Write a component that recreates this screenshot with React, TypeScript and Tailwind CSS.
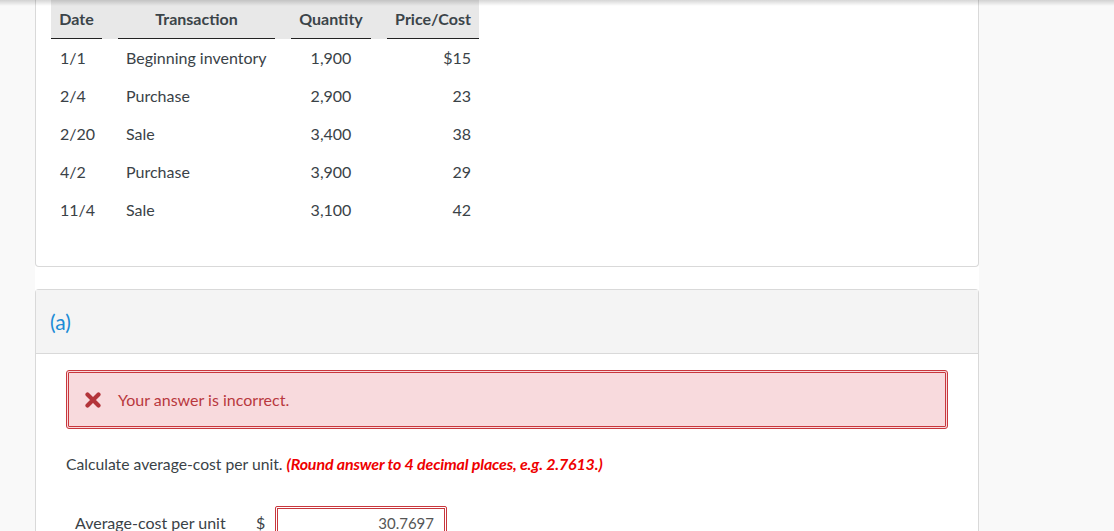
import React from "react";

const rows = [
  ["1/1", "Beginning inventory", "1,900", "$15"],
  ["2/4", "Purchase", "2,900", "23"],
  ["2/20", "Sale", "3,400", "38"],
  ["4/2", "Purchase", "3,900", "29"],
  ["11/4", "Sale", "3,100", "42"],
];

export default function App() {
  return (
    <div
      className="relative h-[531px] w-[1114px] overflow-hidden bg-[#f9f9f9] text-[#3a4247]"
      style={{ fontFamily: "Lato, 'Open Sans', sans-serif" }}
    >
      <div className="pointer-events-none absolute left-0 right-0 top-0 z-10 h-[6px] bg-gradient-to-b from-[rgba(0,0,0,0.16)] to-transparent" />
      <div className="ml-[35px] w-[944px] bg-white">
        {/* Card 1 */}
        <div className="rounded-b-[4px] border-x border-b border-[#d9d9d9] pl-[15px] pb-[37px]">
          <div className="w-[428px] text-[16px]">
            <div className="grid h-[39px] grid-cols-[51px_157px_80px_92px] gap-x-4 bg-[#e8e8e8] font-bold text-[#3b4449]">
              <div className="flex items-center justify-center border-b border-[#222]">Date</div>
              <div className="flex items-center justify-center border-b border-[#222]">Transaction</div>
              <div className="flex items-center justify-center border-b border-[#222]">Quantity</div>
              <div className="flex items-center justify-center border-b border-[#222]">Price/Cost</div>
            </div>
            {rows.map((r) => (
              <div key={r[0]} className="grid h-[38px] grid-cols-[51px_157px_80px_92px] items-center gap-x-4">
                <div className="pl-[9px]">{r[0]}</div>
                <div className="pl-[8px]">{r[1]}</div>
                <div className="text-center">{r[2]}</div>
                <div className="pr-[8px] text-right">{r[3]}</div>
              </div>
            ))}
          </div>
        </div>

        {/* Card 2 */}
        <div className="mt-[22px] rounded-t-[4px] border border-b-0 border-[#d9d9d9]">
          <div className="flex h-[64px] items-center border-b border-[#d9d9d9] bg-[#f4f4f4] pl-[14px] text-[21px] text-[#1b8bd6]">
            (a)
          </div>
          <div className="px-[30px] pt-[16px] pb-[40px]">
            <div className="flex h-[59px] items-center rounded-[3px] border-[3px] border-double border-[#c8373d] bg-[#f8dadd] pl-[16px] text-[16px] text-[#b9383e]">
              <svg width="16" height="16" viewBox="0 0 16 16" className="mr-[17px]">
                <path d="M2.5 2.5 L13.5 13.5 M13.5 2.5 L2.5 13.5" stroke="#b3343a" strokeWidth="4.2" strokeLinecap="round" />
              </svg>
              <span>Your answer is incorrect.</span>
            </div>
            <div className="mt-[23px] text-[15.7px] leading-[24px] text-[#3a4247]">
              Calculate average-cost per unit.{" "}
              <span className="text-[16px] font-bold italic tracking-[-0.15px] text-[#ee0000]">
                (Round answer to 4 decimal places, e.g. 2.7613.)
              </span>
            </div>
            <div className="mt-[30px] flex items-center">
              <div className="w-[190px] pl-[9px] text-[16px]">Average-cost per unit</div>
              <div className="w-[19px] text-[16px]">$</div>
              <div className="flex h-[34px] w-[172px] items-center justify-end rounded-[2px] border-[3px] border-double border-[#c8373d] bg-white pr-[10px] text-[15px] text-[#555]">
                30.7697
              </div>
            </div>
          </div>
        </div>
      </div>
    </div>
  );
}
